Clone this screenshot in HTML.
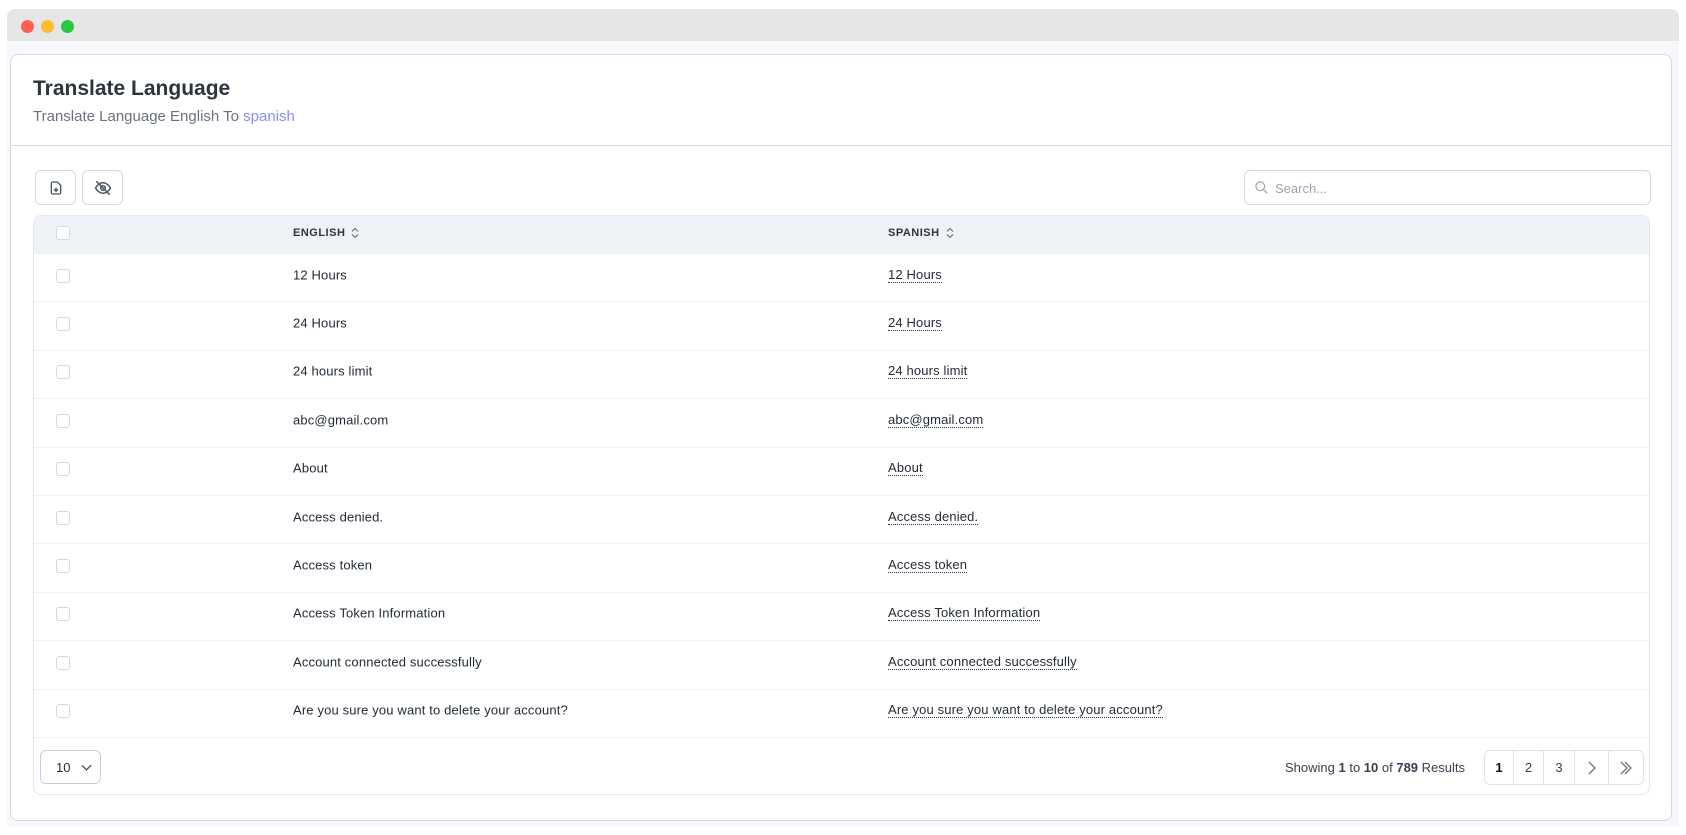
<!DOCTYPE html>
<html><head><meta charset="utf-8"><style>
*{box-sizing:border-box;margin:0;padding:0}
body{width:1686px;height:835px;background:#fff;font-family:"Liberation Sans",sans-serif;color:#1f2937;position:relative;overflow:hidden}
.win{position:absolute;left:7px;top:9px;width:1672px;height:818px;background:#f7f8fb;border-radius:8px 8px 0 0}
.bar{height:32px;background:#e6e6e6;border-radius:8px 8px 0 0;position:relative}
.dot{position:absolute;top:11px;width:13px;height:13px;border-radius:50%}
.card{position:absolute;left:10px;top:54px;width:1662px;height:767px;background:#fff;border:1px solid #d3d9e6;border-radius:8px}
h1{position:absolute;left:22px;top:22px;font-size:21px;font-weight:bold;color:#2d3440}
.sub{position:absolute;left:22px;top:53px;font-size:15px;color:#6b7280}
.sub span{color:#8b8cf5}
.hr{position:absolute;left:0;right:0;top:90px;border-top:1px solid #d3d9e6}
.btn{position:absolute;top:115px;width:41px;height:35px;border:1px solid #d5d8df;border-radius:6px;display:flex;align-items:center;justify-content:center}
.search{position:absolute;left:1233px;top:115px;width:407px;height:35px;border:1px solid #d5d8df;border-radius:6px;font-size:13px;color:#9ca3af;padding:10px 0 0 30px}
.tbl{position:absolute;left:22px;top:160px;width:1617px;height:580px;border:1px solid #e2e7ef;border-radius:8px;overflow:hidden}
.th{height:38px;background:#eff3f8;position:relative;font-size:11px;font-weight:bold;letter-spacing:.5px;color:#2d3440}
.row{height:48.4px;border-bottom:1px solid #eef1f5;position:relative;font-size:13px;letter-spacing:.15px}
.cb{position:absolute;left:22px;top:50%;margin-top:-9px;width:14px;height:14px;border:1px solid #d5d8df;border-radius:3px;background:#fff}
.c1{position:absolute;left:259px;top:50%;transform:translateY(-50%);margin-top:-3px}
.th .c1{margin-top:-2px}
.c2{position:absolute;left:854px;top:50%;transform:translateY(-50%);margin-top:-3px;border-bottom:1px dotted #333;line-height:15px}
.sel{position:absolute;left:6px;top:534px;width:61px;height:34px;border:1px solid #c5cde0;border-radius:6px;font-size:13px;padding:9px 0 0 15px}
.info{position:absolute;left:1251px;top:544px;font-size:13px;color:#374151}
.pg{position:absolute;left:1450px;top:534px;height:35px;display:flex;border:1px solid #dde2ea;border-radius:6px;overflow:hidden}
.pg div{height:33px;display:flex;align-items:center;justify-content:center;border-left:1px solid #dde2ea;font-size:13px;color:#374151}
.pg div:first-child{border-left:none;font-weight:bold;color:#111}
.srt{display:inline-block;vertical-align:middle;margin-left:6px}
</style></head><body>
<div class="win"><div class="bar">
<div class="dot" style="left:14px;background:#fe5f57"></div>
<div class="dot" style="left:34px;background:#febc2e"></div>
<div class="dot" style="left:54px;background:#28c840"></div></div></div>
<div class="card">
<h1>Translate Language</h1>
<div class="sub">Translate Language English To <span>spanish</span></div>
<div class="hr"></div>
<div class="btn" style="left:24px"><svg width="16" height="16" viewBox="0 0 24 24" fill="none" stroke="#4b5563" stroke-width="2"><path d="M14 3H7a2 2 0 0 0-2 2v14a2 2 0 0 0 2 2h10a2 2 0 0 0 2-2V8z"/><path d="M12 11v6M9 14l3 3 3-3"/></svg></div>
<div class="btn" style="left:71px"><svg width="18" height="18" viewBox="0 0 24 24" fill="none" stroke="#4b5563" stroke-width="2"><path d="M2 12s4-7 10-7 10 7 10 7-4 7-10 7S2 12 2 12z"/><circle cx="12" cy="12" r="3"/><path d="M3 3l18 18"/></svg></div>
<div class="search"><svg style="position:absolute;left:9px;top:9px" width="15" height="15" viewBox="0 0 24 24" fill="none" stroke="#a0a7b4" stroke-width="2"><circle cx="10" cy="10" r="7"/><path d="M15 15l6 6"/></svg>Search...</div>
<div class="tbl">
<div class="th"><div class="cb"></div><div class="c1">ENGLISH<svg class="srt" width="8" height="12" viewBox="0 0 8 12" fill="none" stroke="#777" stroke-width="1.2"><path d="M1 4.5l3-3 3 3M1 7.5l3 3 3-3"/></svg></div><div class="c1" style="left:854px">SPANISH<svg class="srt" width="8" height="12" viewBox="0 0 8 12" fill="none" stroke="#777" stroke-width="1.2"><path d="M1 4.5l3-3 3 3M1 7.5l3 3 3-3"/></svg></div></div>
<div class="row"><div class="cb"></div><div class="c1">12 Hours</div><div class="c2">12 Hours</div></div>
<div class="row"><div class="cb"></div><div class="c1">24 Hours</div><div class="c2">24 Hours</div></div>
<div class="row"><div class="cb"></div><div class="c1">24 hours limit</div><div class="c2">24 hours limit</div></div>
<div class="row"><div class="cb"></div><div class="c1">abc@gmail.com</div><div class="c2">abc@gmail.com</div></div>
<div class="row"><div class="cb"></div><div class="c1">About</div><div class="c2">About</div></div>
<div class="row"><div class="cb"></div><div class="c1">Access denied.</div><div class="c2">Access denied.</div></div>
<div class="row"><div class="cb"></div><div class="c1">Access token</div><div class="c2">Access token</div></div>
<div class="row"><div class="cb"></div><div class="c1">Access Token Information</div><div class="c2">Access Token Information</div></div>
<div class="row"><div class="cb"></div><div class="c1">Account connected successfully</div><div class="c2">Account connected successfully</div></div>
<div class="row"><div class="cb"></div><div class="c1">Are you sure you want to delete your account?</div><div class="c2">Are you sure you want to delete your account?</div></div>
<div class="sel">10 <svg style="position:absolute;left:40px;top:13px" width="11" height="8" viewBox="0 0 12 8" fill="none" stroke="#4b5563" stroke-width="1.5"><path d="M1 1l5 5 5-5"/></svg></div>
<div class="info">Showing <b>1</b> to <b>10</b> of <b>789</b> Results</div>
<div class="pg"><div style="width:28px">1</div><div style="width:30px">2</div><div style="width:31px">3</div><div style="width:34px"><svg width="10" height="14" viewBox="0 0 10 14" fill="none" stroke="#6b7280" stroke-width="1.3"><path d="M2 1l6 6-6 6"/></svg></div><div style="width:35px"><svg width="14" height="14" viewBox="0 0 14 14" fill="none" stroke="#6b7280" stroke-width="1.3"><path d="M2 1l6 6-6 6M6 1l6 6-6 6"/></svg></div></div>
</div>
</div>
</body></html>
